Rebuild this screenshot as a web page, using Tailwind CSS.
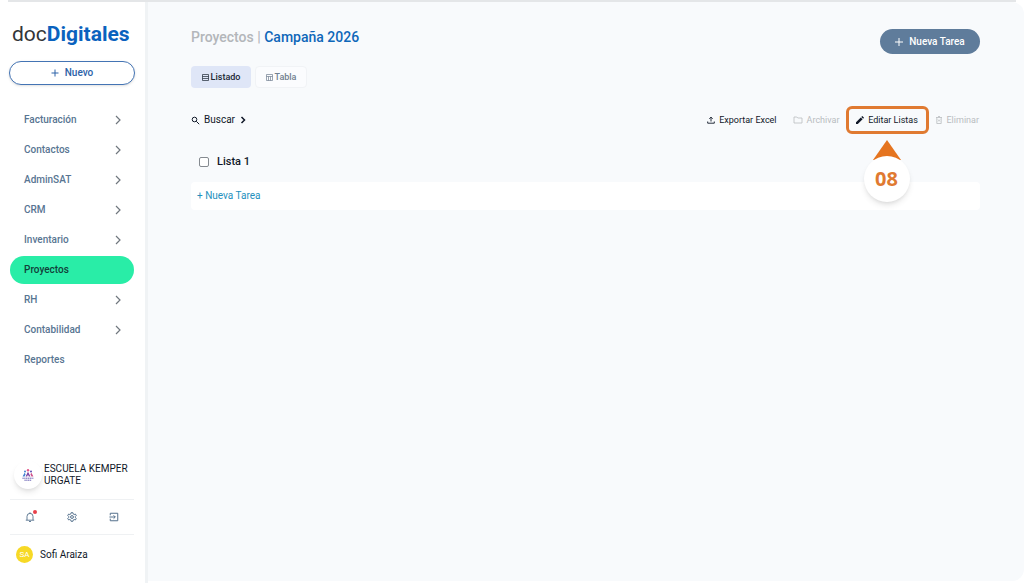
<!DOCTYPE html>
<html lang="es">
<head>
	<meta charset="UTF-8">
	<meta name="viewport" content="width=device-width, initial-scale=1.0">
	<title>docDigitales - Proyectos</title>

	<script src="https://cdn.jsdelivr.net/npm/@tailwindcss/browser@4"></script>
</head>
<body class="bg-white font-['Roboto',sans-serif] text-[10px] leading-3 text-gray-900">
	<div class="min-h-screen flex flex-col">
		<div class="mx-2 h-0.5 bg-[#e4e6e8] shrink-0"></div>
		<div class="flex grow">
			<aside class="w-[148px] shrink-0 flex flex-col border-r-3 border-[#f0f3f5]">
				<a href="#" class="mt-[18px] ml-3 text-[21px] leading-7 text-[#333538]">doc<span class="font-bold text-[#0a62be]">Digitales</span></a>
				<button type="button" class="mt-[13px] mx-[9px] mr-[10px] h-6 flex items-center justify-center gap-1.5 rounded-full border border-[#4474b4] bg-white font-medium text-[#2c62a8] shadow-sm">
					<svg class="size-2" viewBox="0 0 8 8" fill="none" stroke="currentColor" aria-hidden="true"><path d="M4 .5v7M.5 4h7" /></svg>
					Nuevo
				</button>

				<nav class="mt-[21px] ml-[10px] mr-[11px] flex flex-col gap-0.5 font-medium text-[#587592]">
					<a href="#" class="h-7 pl-3.5 pr-3 flex items-center justify-between">Facturación
						<svg class="w-2 h-2.5 text-[#70777e]" viewBox="0 0 8 10" fill="none" stroke="currentColor" stroke-width="1.200" aria-hidden="true"><path d="M2 1l4 4-4 4" /></svg>
					</a>
					<a href="#" class="h-7 pl-3.5 pr-3 flex items-center justify-between">Contactos
						<svg class="w-2 h-2.5 text-[#70777e]" viewBox="0 0 8 10" fill="none" stroke="currentColor" stroke-width="1.200" aria-hidden="true"><path d="M2 1l4 4-4 4" /></svg>
					</a>
					<a href="#" class="h-7 pl-3.5 pr-3 flex items-center justify-between">AdminSAT
						<svg class="w-2 h-2.5 text-[#70777e]" viewBox="0 0 8 10" fill="none" stroke="currentColor" stroke-width="1.200" aria-hidden="true"><path d="M2 1l4 4-4 4" /></svg>
					</a>
					<a href="#" class="h-7 pl-3.5 pr-3 flex items-center justify-between">CRM
						<svg class="w-2 h-2.5 text-[#70777e]" viewBox="0 0 8 10" fill="none" stroke="currentColor" stroke-width="1.200" aria-hidden="true"><path d="M2 1l4 4-4 4" /></svg>
					</a>
					<a href="#" class="h-7 pl-3.5 pr-3 flex items-center justify-between">Inventario
						<svg class="w-2 h-2.5 text-[#70777e]" viewBox="0 0 8 10" fill="none" stroke="currentColor" stroke-width="1.200" aria-hidden="true"><path d="M2 1l4 4-4 4" /></svg>
					</a>
					<a href="#" class="h-7 pl-3.5 pr-3 flex items-center rounded-full bg-[#29eda7] text-[#12403a]" aria-current="page">Proyectos</a>
					<a href="#" class="h-7 pl-3.5 pr-3 flex items-center justify-between">RH
						<svg class="w-2 h-2.5 text-[#70777e]" viewBox="0 0 8 10" fill="none" stroke="currentColor" stroke-width="1.200" aria-hidden="true"><path d="M2 1l4 4-4 4" /></svg>
					</a>
					<a href="#" class="h-7 pl-3.5 pr-3 flex items-center justify-between">Contabilidad
						<svg class="w-2 h-2.5 text-[#70777e]" viewBox="0 0 8 10" fill="none" stroke="currentColor" stroke-width="1.200" aria-hidden="true"><path d="M2 1l4 4-4 4" /></svg>
					</a>
					<a href="#" class="h-7 pl-3.5 pr-3 flex items-center">Reportes</a>
				</nav>

				<div class="mt-auto ml-[10px] mr-[11px] pb-5">
					<div class="pl-1 pb-2.5 flex items-center gap-0.5">
						<span class="size-7 shrink-0 flex items-center justify-center rounded-full bg-white shadow-md">
							<svg class="size-3.5" viewBox="0 0 14 14" aria-hidden="true">
								<circle cx="7" cy="2.2" r="1.2" fill="#e4578a" />
								<circle cx="4" cy="3.6" r="1" fill="#4a7fd0" />
								<circle cx="10" cy="3.6" r="1" fill="#5b4bb0" />
								<path d="M7 3.8L4.6 8.6h1.6L7 6.6l.8 2h1.6z" fill="#7a3fa0" />
								<path d="M3.6 4.8L1.6 8.6h2l1-2.4z" fill="#3f7fd0" />
								<path d="M10.4 4.8l2 3.8h-2l-1-2.4z" fill="#d0508a" />
								<path d="M1.4 10.2h11.2M3.4 12.2h7.2" stroke="#6a62b4" stroke-dasharray="1.4 .4" />
							</svg>
						</span>
						<span class="whitespace-nowrap">ESCUELA KEMPER<br>URGATE</span>
					</div>
					<div class="h-9 px-[15px] flex items-center justify-between border-y border-[#eff1f3] text-[#54708c]">
						<button type="button" class="relative" aria-label="Notificaciones">
							<svg class="size-2.5" viewBox="0 0 10 10" fill="none" stroke="currentColor" stroke-width=".9" aria-hidden="true"><path d="M.8 8.200h8.400M2 8V4.400a3 3 0 016 0V8M5 .3v1.200M4 9.500h2" /></svg>
							<span class="absolute -top-0.5 -right-0.5 size-1 rounded-full bg-[#e8404a]"></span>
						</button>
						<button type="button" aria-label="Configuración">
							<svg class="size-2.5" viewBox="0 0 12 12" fill="none" stroke="currentColor" stroke-width="1.200" aria-hidden="true"><path d="M5 .8h2l.4 1.500 1.200.7 1.500-.5 1 1.800L10 5.400v1.200l1.100 1.100-1 1.800-1.500-.5-1.200.7-.4 1.500H5l-.4-1.500L3.400 9l-1.500.5-1-1.800L2 6.600V5.400L.9 4.300l1-1.800 1.500.5 1.200-.7z" /><circle cx="6" cy="6" r="1.700" /></svg>
						</button>
						<button type="button" aria-label="Cerrar sesión">
							<svg class="size-2.5" viewBox="0 0 12 12" fill="none" stroke="currentColor" stroke-width="1.200" aria-hidden="true"><path d="M1.500 4V1.500h9v9h-9V8M.5 6h7M5.500 4l2 2-2 2" /></svg>
						</button>
					</div>
					<a href="#" class="pt-[11px] pl-1.5 flex items-center gap-[7px]">
						<span class="size-[17px] flex items-center justify-center rounded-full bg-[#f7d926] text-[8px] text-white">SA</span>
						Sofi Araiza
					</a>
				</div>
			</aside>

			<main class="grow mb-0.5 pl-[43px] pr-11 rounded-r-xl bg-[#f8fafc]">
				<header class="pt-[27px] flex items-start justify-between">
					<h1 class="text-sm leading-4 font-medium text-[#b3b6ba]">Proyectos | <span class="text-[#0e67b9]">Campaña 2026</span></h1>
					<button type="button" class="h-[25px] w-[100px] flex items-center justify-center gap-1.5 rounded-full bg-[#5f7c9b] font-medium text-white">
						<svg class="size-2" viewBox="0 0 8 8" fill="none" stroke="currentColor" aria-hidden="true"><path d="M4 0v8M0 4h8" /></svg>
						Nueva Tarea
					</button>
				</header>

				<div class="mt-3 flex gap-1 text-[9px]">
					<button type="button" class="h-[22px] w-[60px] flex items-center justify-center gap-0.5 rounded-sm bg-[#dfe6f7] font-medium text-[#1c2634]">
						<svg class="size-[7px]" viewBox="0 0 7 7" fill="none" stroke="currentColor" stroke-width=".7" aria-hidden="true"><path d="M.5.5h6v6h-6zM.5 2.500h6M.5 4.500h6" /></svg>
						Listado
					</button>
					<button type="button" class="h-[22px] w-[52px] flex items-center justify-center gap-0.5 rounded-sm border border-[#f1f3f6] bg-[#fbfcfe] font-medium text-[#718090]">
						<svg class="size-[7px]" viewBox="0 0 7 7" fill="none" stroke="currentColor" stroke-width=".7" aria-hidden="true"><path d="M.5.5h6v6h-6zM.5 2.500h6M2.500 2.500v4M4.500 2.500v4" /></svg>
						Tabla
					</button>
				</div>

				<div class="mt-[18px] pr-px h-7 flex items-center justify-between">
					<button type="button" class="flex items-center gap-1">
						<svg class="size-[9px]" viewBox="0 0 9 9" fill="none" stroke="currentColor" aria-hidden="true"><circle cx="3.500" cy="3.500" r="2.300" /><path d="M5.300 5.300L8.200 8.200" /></svg>
						Buscar
						<svg class="size-2" viewBox="0 0 8 8" fill="none" stroke="currentColor" stroke-width="1.500" aria-hidden="true"><path d="M2.500 1l3 3-3 3" /></svg>
					</button>
					<div class="flex items-center text-[9px]">
						<button type="button" class="mr-4 flex items-center gap-1">
							<svg class="size-2" viewBox="0 0 8 8" fill="none" stroke="currentColor" stroke-width=".9" aria-hidden="true"><path d="M.7 5.500v1.700h6.600V5.500M4 5.500V1.300M2.300 2.800L4 1.100l1.700 1.700" /></svg>
							Exportar Excel
						</button>
						<button type="button" class="flex items-center gap-1 text-[#b9bcbf]" disabled>
							<svg class="size-2.5" viewBox="0 0 10 10" fill="none" stroke="currentColor" stroke-width=".8" aria-hidden="true"><path d="M1 2h2.800l1 1H9v5H1z" /></svg>
							Archivar
						</button>
						<div class="relative ml-1.5 mr-1.5">
							<button type="button" class="h-7 w-[83px] flex items-center justify-center gap-1 rounded-md border-3 border-[#e07a31]">
								<svg class="size-2" viewBox="0 0 8 8" fill="currentColor" aria-hidden="true"><path d="M0 8V6.200L4.800 1.400l1.800 1.800L1.800 8zM5.300.9l.7-.7q.3-.3.6 0l1.200 1.200q.3.300 0 .6l-.7.700z" /></svg>
								Editar Listas
							</button>
							<!-- step marker -->
							<div class="absolute top-[34px] left-[18px] flex flex-col items-center">
								<svg class="w-7 h-5" viewBox="0 0 28 20" fill="#e5741f" aria-hidden="true"><path d="M14 0l14 20H0z" /></svg>
								<div class="-mt-1 size-[46px] flex items-center justify-center rounded-full bg-white font-['Open_Sans',sans-serif] text-xl leading-6 font-bold text-[#e07a31] shadow-md">08</div>
							</div>
						</div>
						<button type="button" class="flex items-center gap-1 text-[#b9bcbf]" disabled>
							<svg class="size-2" viewBox="0 0 8 8" fill="none" stroke="currentColor" stroke-width=".8" aria-hidden="true"><path d="M1 1.500h6M3 .5h2M1.800 1.500v6h4.400v-6M3 3.500l2 2M5 3.500l-2 2" /></svg>
							Eliminar
						</button>
					</div>
				</div>

				<section class="mt-[21px]">
					<label class="pl-2 flex items-center gap-2 text-[11px] leading-3.5 font-medium">
						<input type="checkbox" class="appearance-none size-2.5 rounded-xs border border-[#858a90] bg-white">
						Lista 1
					</label>
					<div class="mt-[13px] h-7 pl-1.5 flex items-center rounded-sm bg-white">
						<a href="#" class="text-[#2490bd]">+ Nueva Tarea</a>
					</div>
				</section>
			</main>
		</div>
	</div>
</body>
</html>
